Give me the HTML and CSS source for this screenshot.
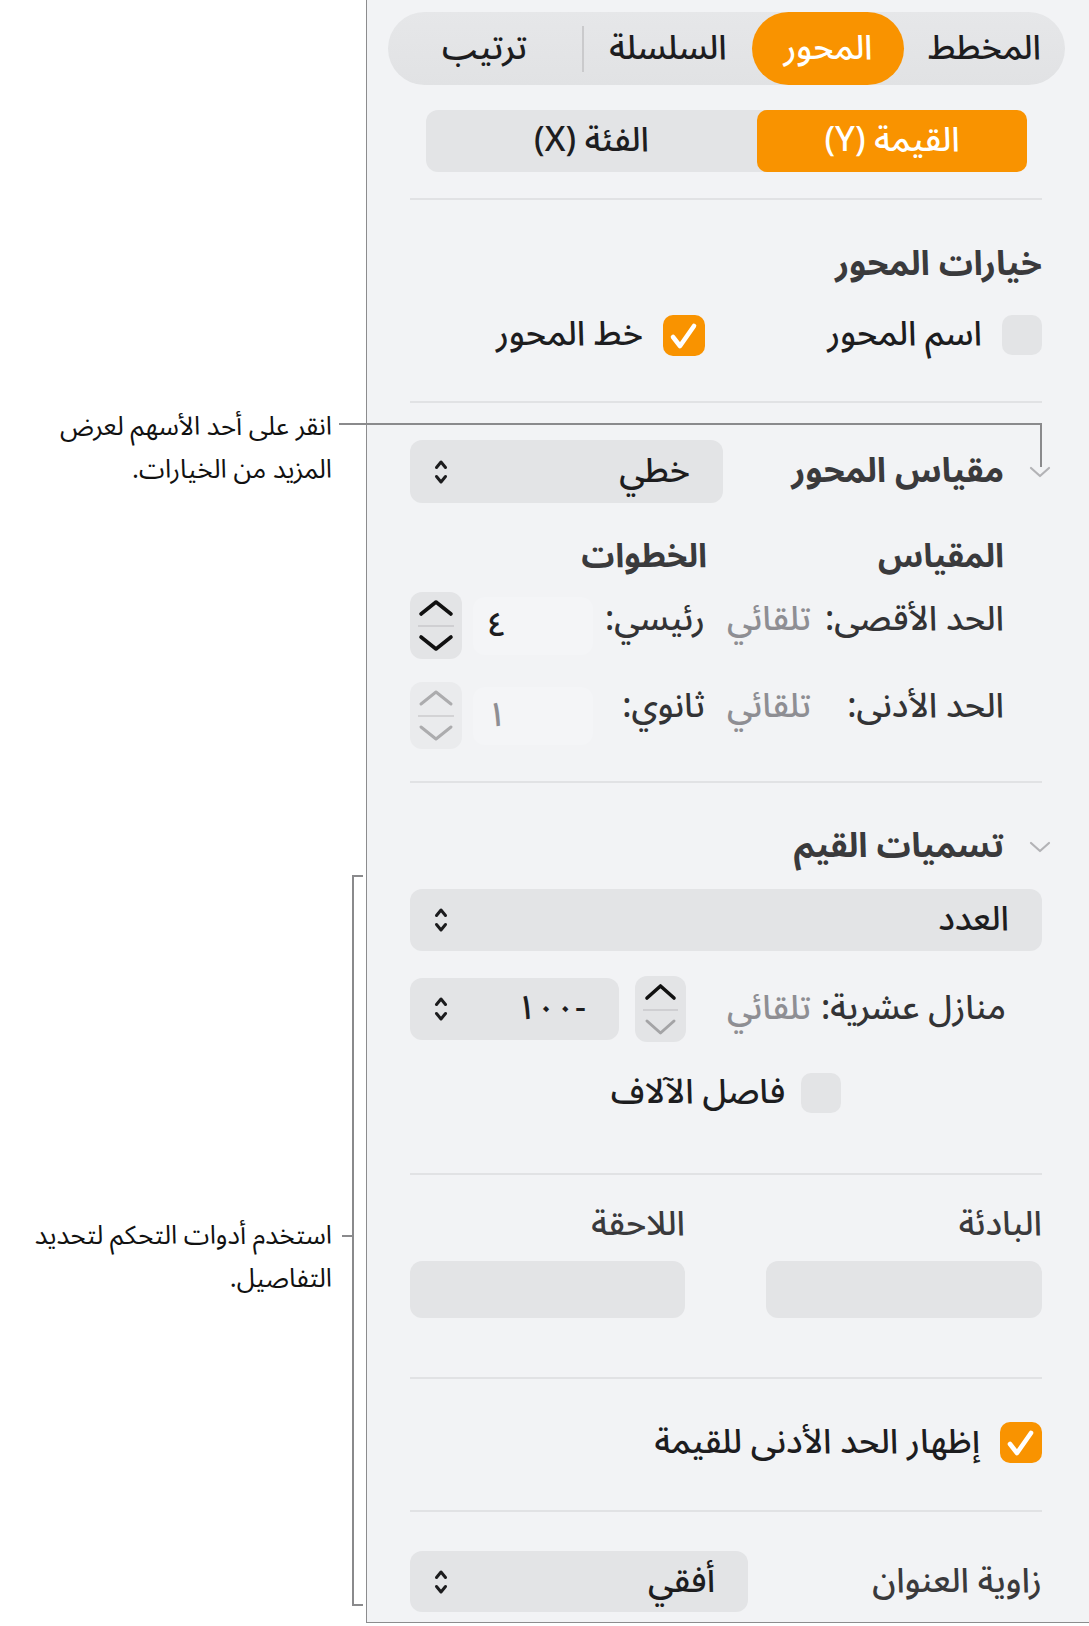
FILE: index.html
```html
<!DOCTYPE html>
<html lang="ar">
<head>
<meta charset="utf-8">
<title>خيارات المحور</title>
<link rel="stylesheet" href="styles.css">
</head>
<body>
<div class="page">
  <div class="gutter"></div>

  <div class="panel" dir="rtl">
    <div class="tabs">
      <div class="tab t1">المخطط</div>
      <div class="tab t2 active">المحور</div>
      <div class="tab t3">السلسلة</div>
      <div class="tab-div"></div>
      <div class="tab t4">ترتيب</div>
    </div>

    <div class="seg2">
      <div class="seg seg-a active">القيمة (Y)</div>
      <div class="seg seg-b">الفئة (X)</div>
    </div>

    <div class="sep s1"></div>

    <div class="heading h-opts">خيارات المحور</div>

    <div class="check-row cr1">
      <div class="check-item ci1"><span class="box"></span><span class="clabel">اسم المحور</span></div>
      <div class="check-item"><span class="box on"><svg width="42" height="41" viewBox="0 0 42 41"><polyline points="10,22 17,31 31,11" fill="none" stroke="#fff" stroke-width="4.6" stroke-linecap="round" stroke-linejoin="round"/></svg></span><span class="clabel">خط المحور</span></div>
    </div>

    <div class="sep s2"></div>

    <div class="disc-row dr1">
      <span class="disc"><svg width="22" height="12" viewBox="0 0 22 12"><polyline points="2,2 11,10 20,2" fill="none" stroke="#b3b3b6" stroke-width="2.2" stroke-linecap="round" stroke-linejoin="round"/></svg></span>
      <span class="dtitle">مقياس المحور</span>
      <div class="popup p-scale"><span class="ptext">خطي</span><svg class="updown" width="14" height="30" viewBox="0 0 14 30"><path d="M2.5 10.5 L7 5 L11.5 10.5 M2.5 19.5 L7 25 L11.5 19.5" fill="none" stroke="#1c1c1e" stroke-width="3" stroke-linecap="round" stroke-linejoin="round"/></svg></div>
    </div>

    <div class="col-heads">
      <span class="ch1">المقياس</span>
      <span class="ch2">الخطوات</span>
    </div>

    <div class="scale-row sr1">
      <span class="lbl">الحد الأقصى:</span>
      <span class="auto">تلقائي</span>
      <span class="lbl2">رئيسي:</span>
      <span class="numfield">٤</span>
      <span class="stepper"><svg width="52" height="67" viewBox="0 0 52 67"><polyline points="11,22 26,10 41,22" fill="none" stroke="#111" stroke-width="3.6" stroke-linecap="round" stroke-linejoin="round"/><line x1="8" y1="34" x2="44" y2="34" stroke="#cfcfd2" stroke-width="2"/><polyline points="11,45 26,57 41,45" fill="none" stroke="#111" stroke-width="3.6" stroke-linecap="round" stroke-linejoin="round"/></svg></span>
    </div>

    <div class="scale-row sr2">
      <span class="lbl">الحد الأدنى:</span>
      <span class="auto">تلقائي</span>
      <span class="lbl2">ثانوي:</span>
      <span class="numfield dim">١</span>
      <span class="stepper off"><svg width="52" height="67" viewBox="0 0 52 67"><polyline points="11,22 26,10 41,22" fill="none" stroke="#acacae" stroke-width="3" stroke-linecap="round" stroke-linejoin="round"/><line x1="8" y1="34" x2="44" y2="34" stroke="#d3d3d5" stroke-width="2"/><polyline points="11,45 26,57 41,45" fill="none" stroke="#acacae" stroke-width="3" stroke-linecap="round" stroke-linejoin="round"/></svg></span>
    </div>

    <div class="sep s3"></div>

    <div class="disc-row dr2">
      <span class="disc"><svg width="22" height="12" viewBox="0 0 22 12"><polyline points="2,2 11,10 20,2" fill="none" stroke="#b3b3b6" stroke-width="2.2" stroke-linecap="round" stroke-linejoin="round"/></svg></span>
      <span class="dtitle">تسميات القيم</span>
    </div>

    <div class="popup p-num"><span class="ptext">العدد</span><svg class="updown" width="14" height="30" viewBox="0 0 14 30"><path d="M2.5 10.5 L7 5 L11.5 10.5 M2.5 19.5 L7 25 L11.5 19.5" fill="none" stroke="#1c1c1e" stroke-width="3" stroke-linecap="round" stroke-linejoin="round"/></svg></div>

    <div class="dec-row">
      <span class="dlbl">منازل عشرية:</span>
      <span class="dauto">تلقائي</span>
      <span class="stepper st2"><svg width="51" height="66" viewBox="0 0 51 66"><polyline points="12,22 25.5,10 39,22" fill="none" stroke="#111" stroke-width="3.6" stroke-linecap="round" stroke-linejoin="round"/><line x1="8" y1="34" x2="43" y2="34" stroke="#cfcfd2" stroke-width="2"/><polyline points="12,45 25.5,57 39,45" fill="none" stroke="#a4a4a6" stroke-width="3" stroke-linecap="round" stroke-linejoin="round"/></svg></span>
      <div class="popup p-dec"><span class="ptext tight">-١٠٠</span><svg class="updown" width="14" height="30" viewBox="0 0 14 30"><path d="M2.5 10.5 L7 5 L11.5 10.5 M2.5 19.5 L7 25 L11.5 19.5" fill="none" stroke="#1c1c1e" stroke-width="3" stroke-linecap="round" stroke-linejoin="round"/></svg></div>
    </div>

    <div class="thou-row">
      <span class="box"></span><span class="clabel">فاصل الآلاف</span>
    </div>

    <div class="sep s4"></div>

    <div class="fix-labels">
      <span>البادئة</span>
      <span>اللاحقة</span>
    </div>
    <div class="fix-fields">
      <span class="field"></span>
      <span class="field"></span>
    </div>

    <div class="sep s5"></div>

    <div class="check-item min-row"><span class="box on"><svg width="42" height="41" viewBox="0 0 42 41"><polyline points="10,22 17,31 31,11" fill="none" stroke="#fff" stroke-width="4.6" stroke-linecap="round" stroke-linejoin="round"/></svg></span><span class="clabel">إظهار الحد الأدنى للقيمة</span></div>

    <div class="sep s6"></div>

    <div class="angle-row">
      <span class="alabel">زاوية العنوان</span>
      <div class="popup p-angle"><span class="ptext">أفقي</span><svg class="updown" width="14" height="30" viewBox="0 0 14 30"><path d="M2.5 10.5 L7 5 L11.5 10.5 M2.5 19.5 L7 25 L11.5 19.5" fill="none" stroke="#1c1c1e" stroke-width="3" stroke-linecap="round" stroke-linejoin="round"/></svg></div>
    </div>
  </div>

  <!-- annotation overlays -->
  <div class="callout c1" dir="rtl"><div class="cline">انقر على أحد الأسهم لعرض</div><div class="cline">المزيد من الخيارات.</div></div>
  <div class="leader-h"></div>
  <div class="leader-v"></div>

  <div class="callout c2" dir="rtl"><div class="cline">استخدم أدوات التحكم لتحديد</div><div class="cline">التفاصيل.</div></div>
  <div class="bracket"></div>
  <div class="bracket-tick"></div>
</div>
</body>
</html>
```

FILE: styles.css
```css
* { box-sizing: border-box; }

html, body {
  margin: 0;
  padding: 0;
  background: #ffffff;
}

body {
  font-family: "Noto Sans Arabic", "Noto Sans", "DejaVu Sans", sans-serif;
  color: #1d1d1f;
}

.page {
  position: relative;
  width: 1089px;
  height: 1626px;
  display: flex;
  overflow: hidden;
}

.gutter {
  width: 366px;
  flex: none;
}

.panel {
  width: 723px;
  height: 1623px;
  flex: none;
  background: #f2f3f5;
  border-left: 1px solid #8c8c8e;
  border-bottom: 1px solid #8c8c8e;
  padding-left: 43px;
  padding-right: 47px;
  display: flex;
  flex-direction: column;
  line-height: 1.15;
}

/* ---------- top tabs ---------- */
.tabs {
  margin: 12px -23px 0 -22px;
  height: 73px;
  border-radius: 37px;
  background: linear-gradient(#e6e7e9, #e1e2e4);
  display: flex;
  align-items: center;
  font-size: 34px;
  font-weight: 500;
  color: #1d1d1f;
}
.tab {
  height: 73px;
  display: flex;
  align-items: center;
  justify-content: center;
  flex: none;
}
.t1 { width: 161px; }
.t2 { width: 152px; }
.t3 { width: 168px; }
.t4 { width: 195px; }
.tab.active {
  background: #f99300;
  color: #fff;
  border-radius: 37px;
}
.tab-div {
  width: 2px;
  height: 46px;
  background: #cacacc;
  flex: none;
}

/* ---------- second segmented ---------- */
.seg2 {
  margin: 25px 15px 0 16px;
  height: 62px;
  border-radius: 12px;
  background: #e3e4e6;
  display: flex;
  font-size: 34px;
  font-weight: 500;
}
.seg {
  display: flex;
  align-items: center;
  justify-content: center;
}
.seg-a { width: 270px; }
.seg-b { flex: 1; }
.seg.active {
  background: #f99300;
  color: #fff;
  border-radius: 10px;
}

/* ---------- separators ---------- */
.sep {
  height: 2px;
  background: #e1e2e4;
  flex: none;
}
.s1 { margin-top: 26px; }
.s2 { margin-top: 45px; }
.s3 { margin-top: 32px; }
.s4 { margin-top: 60px; }
.s5 { margin-top: 59px; }
.s6 { margin-top: 47px; }

/* ---------- headings ---------- */
.heading {
  font-size: 34px;
  font-weight: 700;
  color: #3a3a3c;
  height: 40px;
  line-height: 40px;
}
.h-opts { margin-top: 44px; }

/* ---------- checkboxes ---------- */
.box {
  width: 40px;
  height: 40px;
  border-radius: 10px;
  background: #e3e4e6;
  flex: none;
  display: flex;
  align-items: center;
  justify-content: center;
}
.box.on {
  width: 42px;
  height: 41px;
  background: #f99300;
}
.check-row {
  display: flex;
  align-items: center;
  height: 42px;
  margin-top: 30px;
}
.check-item {
  display: flex;
  align-items: center;
  gap: 20px;
}
.ci1 { width: 337px; }
.clabel {
  font-size: 34px;
  font-weight: 500;
  color: #1d1d1f;
}

/* ---------- disclosure rows ---------- */
.disc-row {
  display: flex;
  align-items: center;
  margin-right: -9px;
}
.disc {
  width: 22px;
  display: flex;
  margin-left: 25px;
  flex: none;
}
.dtitle {
  font-size: 34px;
  font-weight: 700;
  color: #3a3a3c;
  flex: 1;
}
.dr1 { margin-top: 37px; height: 63px; }
.dr2 { margin-top: 44px; height: 40px; }

/* ---------- popups ---------- */
.popup {
  background: #e3e4e6;
  border-radius: 12px;
  display: flex;
  align-items: center;
  justify-content: space-between;
  padding-right: 33px;
  padding-left: 24px;
  font-size: 34px;
  font-weight: 500;
  color: #1d1d1f;
  flex: none;
}
.tight { letter-spacing: -4px; }
.p-scale { width: 313px; height: 63px; }
.p-num { margin-top: 22px; height: 62px; }
.p-dec { width: 209px; height: 62px; margin-right: 16px; }
.p-angle { width: 338px; height: 61px; }

/* ---------- scale table ---------- */
.col-heads {
  display: flex;
  align-items: center;
  height: 34px;
  margin-top: 37px;
  padding-right: 38px;
  font-size: 33px;
  font-weight: 700;
  color: #3a3a3c;
}
.ch1 { width: 297px; }

.scale-row {
  display: flex;
  align-items: center;
  height: 67px;
  padding-right: 38px;
  font-size: 34px;
  font-weight: 500;
}
.sr1 { margin-top: 18px; }
.sr2 { margin-top: 23px; }
.lbl { width: 193px; color: #333335; white-space: nowrap; }
.auto { width: 80px; color: #8e8e93; white-space: nowrap; }
.lbl2 { width: 112px; margin-right: 26px; color: #333335; }
.sr1 .lbl, .sr1 .auto, .sr1 .lbl2 { margin-bottom: 12px; }
.sr2 .lbl, .sr2 .auto, .sr2 .lbl2 { margin-bottom: 18px; }
.numfield {
  width: 120px;
  height: 58px;
  border-radius: 12px;
  background: #f4f5f7;
  display: flex;
  align-items: center;
  justify-content: flex-end;
  padding-left: 14px;
  color: #1d1d1f;
}
.numfield.dim { color: #8e8e93; }
.stepper {
  width: 52px;
  height: 67px;
  border-radius: 12px;
  background: #e3e4e6;
  margin-right: 11px;
  display: flex;
  flex: none;
}
.stepper.off { background: #eaebed; }

/* ---------- decimals ---------- */
.dec-row {
  display: flex;
  align-items: center;
  height: 66px;
  margin-top: 25px;
  padding-right: 36px;
  font-size: 34px;
  font-weight: 500;
}
.dlbl { width: 195px; color: #333335; white-space: nowrap; }
.dauto { width: 125px; color: #8e8e93; }
.st2 { width: 51px; height: 66px; margin-right: 0; }

.thou-row {
  display: flex;
  align-items: center;
  justify-content: center;
  gap: 16px;
  height: 40px;
  margin-top: 31px;
}

/* ---------- prefix / suffix ---------- */
.fix-labels {
  display: grid;
  grid-template-columns: 276px 275px;
  column-gap: 81px;
  height: 36px;
  align-items: center;
  margin-top: 30px;
  font-size: 34px;
  font-weight: 500;
  color: #3a3a3c;
}
.fix-fields {
  display: grid;
  grid-template-columns: 276px 275px;
  column-gap: 81px;
  margin-top: 20px;
}
.field {
  height: 57px;
  border-radius: 12px;
  background: #e3e4e6;
}

.min-row {
  margin-top: 43px;
  height: 41px;
}

/* ---------- angle ---------- */
.angle-row {
  display: flex;
  align-items: center;
  justify-content: space-between;
  margin-top: 39px;
  height: 61px;
  font-size: 34px;
  font-weight: 500;
}
.alabel { color: #3a3a3c; }

/* ---------- annotations ---------- */
.callout {
  position: absolute;
  right: 757px;
  font-size: 26px;
  color: #111;
  text-align: right;
  white-space: nowrap;
}
.cline {
  height: 43px;
  line-height: 43px;
}
.c1 { top: 405px; }
.c2 { top: 1214px; }

.leader-h {
  position: absolute;
  left: 339px;
  top: 423px;
  width: 703px;
  height: 2px;
  background: #8a8a8c;
}
.leader-v {
  position: absolute;
  left: 1040px;
  top: 423px;
  width: 2px;
  height: 44px;
  background: #8a8a8c;
}
.bracket {
  position: absolute;
  left: 352px;
  top: 875px;
  width: 11px;
  height: 731px;
  border: 2px solid #8a8a8c;
  border-right: none;
}
.bracket-tick {
  position: absolute;
  left: 342px;
  top: 1235px;
  width: 11px;
  height: 2px;
  background: #8a8a8c;
}
```
